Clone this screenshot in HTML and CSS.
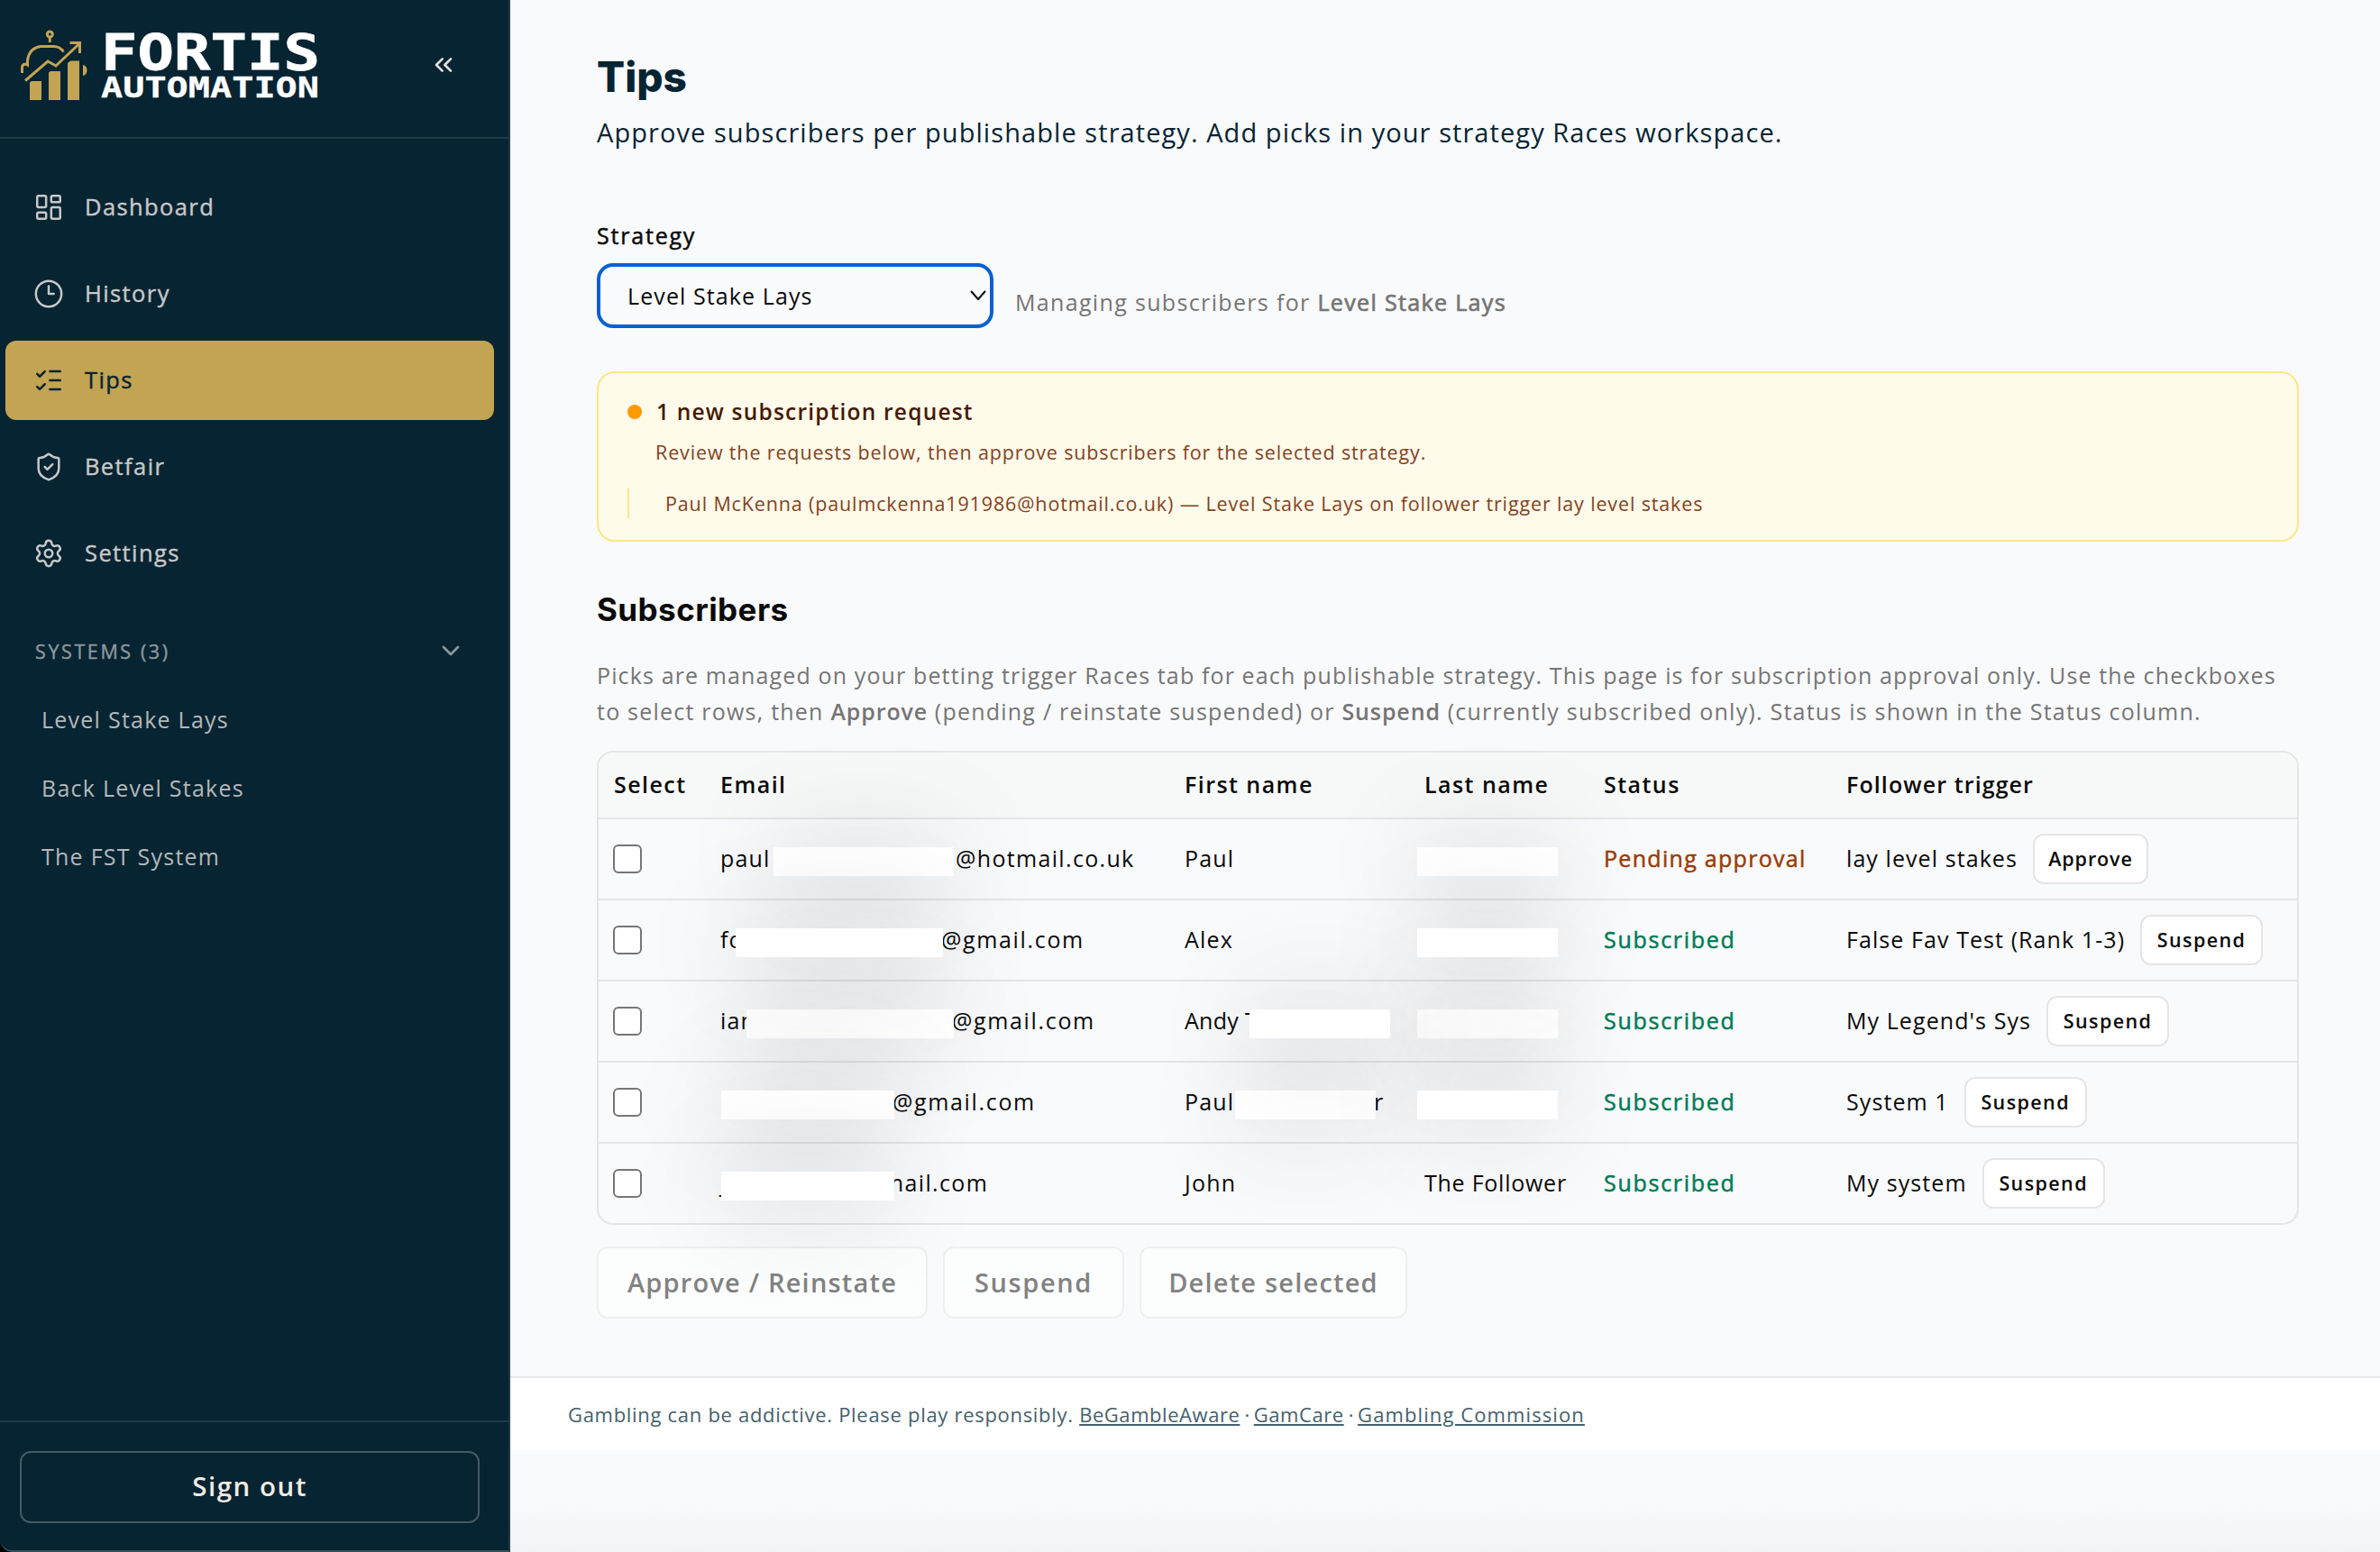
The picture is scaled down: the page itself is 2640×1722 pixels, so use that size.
FILE: index.html
```html
<!DOCTYPE html>
<html lang="en">
<head>
    <meta charset="UTF-8">
    <meta name="viewport" content="width=device-width, initial-scale=1.0">
    <title>Tips - Fortis Automation</title>
    <link rel="stylesheet" href="styles.css">
</head>
<body>
    <div class="app">
        <!-- Sidebar -->
        <aside class="sidebar">
            <div class="sidebar-header">
                <svg class="logo" viewBox="22 32 334 80" width="334" height="80">
                    <g fill="none" stroke="#c3a452" stroke-width="3">
                        <circle cx="55.3" cy="38" r="3"/>
                        <path d="M55.3 41.5V47"/>
                        <path d="M24.5 81v-6q0-4 4.5-4l1.500 1V67q2-14 15-15.500h14q7 0 11 6"/>
                        <path d="M28 89.500L53 68l9 5L88 48.500"/>
                        <path d="M77.500 47.500H88.500V59"/>
                    </g>
                    <path fill="#c3a452" d="M33 91.500l2-1.500h11v21H33zM54 80.500l2-1.500h11v32H54zM75 70l3-2.500h10V111H75zM92 72q4.500 1 4.500 6t-4.500 6z"/>
                    <g class="logo-text">
                        <text x="112" y="76.500" font-size="55.500" stroke-width="0.8" textLength="243" lengthAdjust="spacingAndGlyphs">FORTIS</text>
                        <text x="112" y="108" font-size="31.500" stroke-width="0.3" textLength="242" lengthAdjust="spacingAndGlyphs">AUTOMATION</text>
                    </g>
                </svg>
                <button class="collapse-btn" aria-label="Collapse sidebar">
                    <svg class="icon-sm" viewBox="0 0 24 24"><path d="m11 17-5-5 5-5M18 17l-5-5 5-5"/></svg>
                </button>
            </div>
            <nav class="nav">
                <a class="nav-item">
                    <svg class="icon" viewBox="0 0 24 24"><rect x="3" y="3" width="7" height="9" rx="1"/><rect x="14" y="3" width="7" height="5" rx="1"/><rect x="14" y="12" width="7" height="9" rx="1"/><rect x="3" y="16" width="7" height="5" rx="1"/></svg>
                    <span>Dashboard</span>
                </a>
                <a class="nav-item">
                    <svg class="icon" viewBox="0 0 24 24"><circle cx="12" cy="12" r="10"/><path d="M12 6v6h4"/></svg>
                    <span>History</span>
                </a>
                <a class="nav-item active">
                    <svg class="icon" viewBox="0 0 24 24"><path d="M13 5h8M13 12h8M13 19h8M3 17l2 2 4-4M3 7l2 2 4-4"/></svg>
                    <span>Tips</span>
                </a>
                <a class="nav-item">
                    <svg class="icon" viewBox="0 0 24 24"><path d="M20 13c0 5-3.500 7.500-7.660 8.950a1 1 0 0 1-.67-.01C7.500 20.500 4 18 4 13V6a1 1 0 0 1 1-1c2 0 4.500-1.200 6.240-2.720a1.170 1.170 0 0 1 1.520 0C14.510 3.810 17 5 19 5a1 1 0 0 1 1 1z"/><path d="m9 12 2 2 4-4"/></svg>
                    <span>Betfair</span>
                </a>
                <a class="nav-item">
                    <svg class="icon" viewBox="0 0 24 24"><path d="M9.671 4.136a2.340 2.340 0 0 1 4.659 0 2.340 2.340 0 0 0 3.319 1.915 2.340 2.340 0 0 1 2.330 4.033 2.340 2.340 0 0 0 0 3.831 2.340 2.340 0 0 1-2.330 4.033 2.340 2.340 0 0 0-3.319 1.915 2.340 2.340 0 0 1-4.659 0 2.340 2.340 0 0 0-3.320-1.915 2.340 2.340 0 0 1-2.330-4.033 2.340 2.340 0 0 0 0-3.831A2.340 2.340 0 0 1 6.350 6.051a2.340 2.340 0 0 0 3.319-1.915"/><circle cx="12" cy="12" r="3"/></svg>
                    <span>Settings</span>
                </a>
                <div class="systems-header">
                    <span>SYSTEMS (3)</span>
                    <svg class="icon-sm" viewBox="0 0 24 24"><path d="m6 9 6 6 6-6"/></svg>
                </div>
                <div class="systems-list">
                    <a>Level Stake Lays</a>
                    <a>Back Level Stakes</a>
                    <a>The FST System</a>
                </div>
            </nav>
            <div class="sidebar-footer">
                <button class="signout-btn">Sign out</button>
            </div>
        </aside>

        <!-- Page -->
        <main class="main">
            <div class="content">
                <h1>Tips</h1>
                <p class="subtitle">Approve subscribers per publishable strategy. Add picks in your strategy Races workspace.</p>

                <label class="field-label" for="strategy">Strategy</label>
                <div class="strategy-row">
                    <div class="select-wrap">
                        <select id="strategy">
                            <option>Level Stake Lays</option>
                            <option>Back Level Stakes</option>
                        </select>
                        <svg class="select-arrow" viewBox="0 0 18 12"><path d="M1.500 1.500 9 10l7.500-8.500"/></svg>
                    </div>
                    <p class="managing">Managing subscribers for <strong>Level Stake Lays</strong></p>
                </div>

                <section class="alert">
                    <div class="alert-title"><span class="dot"></span>1 new subscription request</div>
                    <p class="alert-text">Review the requests below, then approve subscribers for the selected strategy.</p>
                    <div class="alert-item">Paul McKenna (paulmckenna191986@hotmail.co.uk) — Level Stake Lays on follower trigger lay level stakes</div>
                </section>

                <h2>Subscribers</h2>
                <p class="description">Picks are managed on your betting trigger Races tab for each publishable strategy. This page is for subscription approval only. Use the checkboxes<br><span>to select rows, then <strong>Approve</strong> (pending / reinstate suspended) or <strong>Suspend</strong> (currently subscribed only). Status is shown in the Status column.</span></p>

                <table class="subs">
                    <colgroup>
                        <col class="c-select"><col class="c-email"><col class="c-first"><col class="c-last"><col class="c-status"><col>
                    </colgroup>
                    <thead>
                        <tr><th>Select</th><th>Email</th><th>First name</th><th>Last name</th><th>Status</th><th>Follower trigger</th></tr>
                    </thead>
                    <tbody>
                        <tr>
                            <td><input type="checkbox"></td>
                            <td><div class="cell"><span class="pre p59">paul</span><span class="mask m200"></span><span class="post gap">@hotmail.co.uk</span></div></td>
                            <td>Paul</td>
                            <td><div class="cell"><span class="mask m156 last"></span></div></td>
                            <td class="pending">Pending approval</td>
                            <td><div class="cell trigger">lay level stakes<button class="row-btn approve">Approve</button></div></td>
                        </tr>
                        <tr>
                            <td><input type="checkbox"></td>
                            <td><div class="cell"><span class="pre p17">fo</span><span class="mask m230 top"></span><span class="post">@gmail.com</span></div></td>
                            <td>Alex</td>
                            <td><div class="cell"><span class="mask m156 last top"></span></div></td>
                            <td class="subscribed">Subscribed</td>
                            <td><div class="cell trigger">False Fav Test (Rank 1-3)<button class="row-btn">Suspend</button></div></td>
                        </tr>
                        <tr>
                            <td><input type="checkbox"></td>
                            <td><div class="cell"><span class="pre p29">ian</span><span class="mask m230"></span><span class="post">@gmail.com</span></div></td>
                            <td><div class="cell"><span class="pre p72">Andy T</span><span class="mask m156 top"></span></div></td>
                            <td><div class="cell"><span class="mask m156 last"></span></div></td>
                            <td class="subscribed">Subscribed</td>
                            <td><div class="cell trigger">My Legend's Sys<button class="row-btn">Suspend</button></div></td>
                        </tr>
                        <tr>
                            <td><input type="checkbox"></td>
                            <td><div class="cell"><span class="pre p1"></span><span class="mask m192"></span><span class="post">@gmail.com</span></div></td>
                            <td><div class="cell"><span class="pre p56">Paul</span><span class="mask m156"></span><span class="post">r</span></div></td>
                            <td><div class="cell"><span class="mask m156 last top"></span></div></td>
                            <td class="subscribed">Subscribed</td>
                            <td><div class="cell trigger">System 1<button class="row-btn">Suspend</button></div></td>
                        </tr>
                        <tr>
                            <td><input type="checkbox"></td>
                            <td><div class="cell"><span class="pre p1 tail">j</span><span class="mask m192 top"></span><span class="post cut"><span>mail.com</span></span></div></td>
                            <td>John</td>
                            <td class="tight">The Follower</td>
                            <td class="subscribed">Subscribed</td>
                            <td><div class="cell trigger">My system<button class="row-btn">Suspend</button></div></td>
                        </tr>
                    </tbody>
                </table>

                <div class="bulk-actions">
                    <button class="bulk-approve" disabled>Approve / Reinstate</button>
                    <button class="bulk-suspend" disabled>Suspend</button>
                    <button class="bulk-delete" disabled>Delete selected</button>
                </div>
            </div>
            <footer class="footer">
                Gambling can be addictive. Please play responsibly. <a>BeGambleAware</a><span class="sep"> · </span><a>GamCare</a><span class="sep"> · </span><a class="wide">Gambling Commission</a>
            </footer>
            <div class="page-fade"></div>
        </main>
    </div>
</body>
</html>
```
FILE: styles.css
```css
* {
    box-sizing: border-box;
}

body {
    margin: 0;
    background: #000;
    font-family: "Open Sans", "Noto Sans", sans-serif;
    font-size: 25px;
    letter-spacing: 1.1px;
    color: #0a0a0a;
}

h1, h2, p {
    margin: 0;
}

button, select {
    font-family: inherit;
    letter-spacing: inherit;
    color: inherit;
}

.app {
    display: flex;
    height: 1722px;
    overflow: hidden;
}

svg {
    display: block;
    flex-shrink: 0;
}

.icon, .icon-sm, .select-arrow {
    fill: none;
    stroke: currentColor;
    stroke-linecap: round;
    stroke-linejoin: round;
}

.icon {
    width: 34px;
    height: 34px;
    stroke-width: 1.75;
}

.icon-sm {
    width: 32px;
    height: 32px;
    stroke-width: 2;
}

/* Sidebar */
.sidebar {
    width: 566px;
    flex-shrink: 0;
    display: flex;
    flex-direction: column;
    background: #062432;
    border-right: 2px solid #213b48;
    border-bottom: 2px solid #384f5a;
    border-bottom-left-radius: 14px;
}

.sidebar-header {
    height: 154px;
    display: flex;
    align-items: center;
    justify-content: space-between;
    padding: 0 56px 8px 22px;
    border-bottom: 2px solid #213b48;
}

.logo {
    overflow: visible;
}

.logo-text {
    font-family: "DejaVu Sans Mono", monospace;
    font-weight: 700;
    letter-spacing: 0;
    fill: #fff;
    stroke: #fff;
}

.collapse-btn {
    padding: 0;
    border: none;
    background: none;
    color: #e4dedb;
}

.nav {
    padding: 32px 16px 0 6px;
    display: flex;
    flex-direction: column;
    gap: 8px;
}

.nav-item {
    height: 88px;
    padding-left: 31px;
    display: flex;
    align-items: center;
    gap: 23px;
    border-radius: 12px;
    color: #c8c8c7;
    font-size: 25.5px;
    letter-spacing: 1.4px;
    -webkit-text-stroke: 0.4px currentColor;
}

.nav-item span {
    margin-top: -2px;
}

.nav-item.active {
    background: #c3a452;
    color: #062432;
}

.systems-header {
    height: 56px;
    margin-top: 28px;
    padding: 0 32px 0 33px;
    display: flex;
    align-items: center;
    justify-content: space-between;
    font-size: 21.5px;
    letter-spacing: 2.6px;
    color: #8e989c;
    -webkit-text-stroke: 0.4px currentColor;
}

.systems-list {
    display: flex;
    flex-direction: column;
    margin-top: 2px;
    padding-left: 40px;
    line-height: 76px;
    letter-spacing: 1.25px;
    color: #b4b8b9;
}

.sidebar-footer {
    margin-top: auto;
    padding: 32px 32px 30px 22px;
    border-top: 2px solid #213b48;
}

.signout-btn {
    display: block;
    width: 100%;
    height: 80px;
    padding-bottom: 4px;
    background: none;
    border: 2px solid #465a64;
    border-radius: 12px;
    color: #f3ece4;
    font-size: 29.5px;
    font-weight: 600;
    letter-spacing: 1.5px;
}

/* Main */
.main {
    flex: 1;
    display: flex;
    flex-direction: column;
    background: #f9fafc;
}

.content {
    padding: 57px 90px 64px 96px;
}

h1 {
    font-family: Inter, sans-serif;
    font-size: 46px;
    font-weight: 800;
    line-height: 56px;
    letter-spacing: 0;
    color: #062432;
}

.subtitle {
    margin-top: 14px;
    font-size: 29px;
    line-height: 40px;
    letter-spacing: 1.07px;
    color: #062432;
    white-space: nowrap;
}

.field-label {
    display: block;
    margin-top: 77px;
    line-height: 34px;
    letter-spacing: 1.8px;
    -webkit-text-stroke: 0.5px currentColor;
}

.strategy-row {
    display: flex;
    align-items: flex-end;
    gap: 24px;
    margin-top: 14px;
}

.select-wrap {
    position: relative;
    width: 440px;
    height: 72px;
}

.select-wrap select {
    appearance: none;
    width: 100%;
    height: 100%;
    padding: 0 29px 0 30px;
    border: 4px solid #0460d4;
    border-radius: 18px;
    background: #fafbfd;
    font-size: 25px;
}

.select-arrow {
    position: absolute;
    right: 8px;
    top: 30px;
    width: 18px;
    height: 12px;
    stroke-width: 2;
}

.managing {
    margin-bottom: 12px;
    line-height: 34px;
    letter-spacing: 1.34px;
    color: #757575;
}

.managing strong {
    font-weight: 400;
    -webkit-text-stroke: 0.7px currentColor;
}

.alert {
    margin-top: 48px;
    padding: 26px 32px 24px 32px;
    border: 2px solid #fee685;
    border-radius: 20px;
    background: #fffbeb;
    color: #83421c;
    font-size: 21.5px;
    letter-spacing: 0.86px;
    white-space: nowrap;
}

.alert-title {
    display: flex;
    align-items: center;
    gap: 16px;
    line-height: 34px;
    font-size: 24.5px;
    font-weight: 600;
    letter-spacing: 1.2px;
    color: #461901;
}

.dot {
    width: 16px;
    height: 16px;
    border-radius: 50%;
    background: #fe9a00;
}

.alert-text {
    margin: 12px 0 0 31px;
    line-height: 32px;
}

.alert-item {
    margin-top: 24px;
    padding-left: 40px;
    border-left: 2px solid #fee685;
    line-height: 33px;
}

h2 {
    margin-top: 53px;
    font-family: Inter, sans-serif;
    font-size: 35px;
    font-weight: 700;
    line-height: 44px;
    letter-spacing: 0.45px;
}

.description {
    margin-top: 31px;
    line-height: 40px;
    letter-spacing: 1.13px;
    color: #757575;
    white-space: nowrap;
}

.description span {
    letter-spacing: 1.22px;
}

.description strong {
    font-weight: 600;
    letter-spacing: 0.9px;
}

/* Subscribers table */
.subs {
    width: 100%;
    margin-top: 24px;
    table-layout: fixed;
    border-collapse: separate;
    border-spacing: 0;
    border: 2px solid #e5e5e5;
    border-radius: 18px;
    letter-spacing: 1.2px;
    white-space: nowrap;
}

.c-select { width: 118px; }
.c-email { width: 515px; }
.c-first { width: 266px; }
.c-last { width: 199px; }
.c-status { width: 269px; }

.subs th {
    height: 74px;
    padding: 0 0 2px 17px;
    background: #f7f9f8;
    border-bottom: 2px solid #e5e5e5;
    text-align: left;
    font-size: 25px;
    font-weight: 600;
    letter-spacing: 1.45px;
}

.subs th:first-child { border-top-left-radius: 16px; }
.subs th:last-child {
    border-top-right-radius: 16px;
    letter-spacing: 1.1px;
}

.subs td {
    height: 90px;
    padding: 0 0 2px 17px;
    border-bottom: 2px solid #e5e5e5;
}

.subs td:first-child {
    padding: 0 0 0 16px;
}

.subs tr:last-child td {
    height: 88px;
    border-bottom: none;
}

.subs input {
    appearance: none;
    display: block;
    width: 32px;
    height: 32px;
    margin: 0;
    border: 2px solid #767676;
    border-radius: 6px;
    background: #fff;
}

.cell {
    display: flex;
    align-items: center;
}

.trigger {
    letter-spacing: 1.08px;
}

.subs .pending {
    color: #9a3c05;
    letter-spacing: 1.3px;
    -webkit-text-stroke: 0.5px currentColor;
}

.subs .subscribed {
    color: #007a55;
    letter-spacing: 1.72px;
    -webkit-text-stroke: 0.5px currentColor;
}

.subs .tight {
    letter-spacing: 0.75px;
}

.pre {
    overflow: hidden;
    flex-shrink: 0;
}

.p1 { width: 1px; }
.p17 { width: 17px; }
.p29 { width: 29px; }
.p56 { width: 56px; }
.p59 { width: 59px; }
.p72 {
    width: 72px;
    letter-spacing: 0.3px;
}

.pre.tail {
    overflow: visible;
}

/* Redaction blocks with a wide soft shadow */
.mask {
    position: relative;
    z-index: 1;
    flex-shrink: 0;
    height: 32px;
    margin-top: 8px;
    background: #fff;
    box-shadow: 0 0 116px rgba(0, 0, 0, 0.23);
}

.mask.top { z-index: 2; }
.mask.last { margin-left: -8px; }
.m156 { width: 156px; }
.m192 { width: 192px; }
.m200 { width: 200px; }
.m230 { width: 230px; }

.post {
    margin-left: -2px;
    letter-spacing: 1.65px;
}

.post.gap {
    margin-left: 2px;
    letter-spacing: 1.33px;
}

.post.cut {
    margin-left: 0;
    overflow: hidden;
    letter-spacing: 1.35px;
}

.post.cut span {
    margin-left: -13px;
}

.row-btn {
    width: 136px;
    height: 56px;
    margin: 2px 0 0 17px;
    padding: 0 0 2px;
    border: 2px solid #e5e5e5;
    border-radius: 12px;
    background: #fff;
    font-size: 21.5px;
    font-weight: 600;
    letter-spacing: 1.4px;
}

.row-btn.approve {
    width: 128px;
    letter-spacing: 0.9px;
}

.bulk-actions {
    display: flex;
    gap: 17px;
    margin-top: 24px;
}

.bulk-actions button {
    height: 80px;
    padding: 0 0 2px;
    border: 2px solid #efefef;
    border-radius: 12px;
    background: #fcfefd;
    color: #828282;
    font-size: 29px;
    font-weight: 600;
    letter-spacing: 1.2px;
}

.bulk-actions .bulk-approve { width: 367px; }
.bulk-actions .bulk-suspend {
    width: 201px;
    letter-spacing: 1.6px;
}
.bulk-actions .bulk-delete { width: 297px; }

.footer {
    height: 82px;
    padding-left: 64px;
    border-top: 2px solid #e5e7eb;
    background: #fff;
    line-height: 80px;
    font-size: 22px;
    letter-spacing: 0.7px;
    color: #46606b;
    white-space: nowrap;
}

.footer a {
    text-decoration: underline;
    text-decoration-thickness: 2px;
    text-underline-offset: 2px;
    letter-spacing: 0.55px;
}

.footer .sep {
    letter-spacing: -0.6px;
}

.footer .wide {
    letter-spacing: 1.1px;
}

.page-fade {
    flex: 1;
    background: linear-gradient(#f9fafc 50%, #f3f4f6);
}
```
